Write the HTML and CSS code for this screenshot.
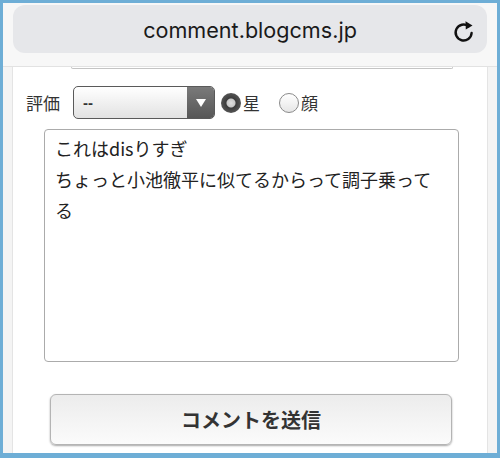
FILE: index.html
```html
<!DOCTYPE html>
<html lang="ja">
  <head>
    <meta charset="UTF-8" />
    <meta name="viewport" content="width=device-width, initial-scale=1.0" />
    <title>comment.blogcms.jp</title>
    <link rel="stylesheet" href="styles.css">
  </head>
  <body>
    <div class="frame">
      <div class="toolbar">
        <div class="urlbar">
          <span class="url">comment.blogcms.jp</span>
          <svg class="reload" width="22" height="24" viewBox="0 0 22 24">
            <path d="M15.5 7.2 A8 8 0 1 0 18.6 14" fill="none" stroke="#111" stroke-width="2.4" stroke-linecap="round" />
            <path d="M12.5 2.2 L19.5 6.4 L12.8 10.6 Z" fill="#111" />
          </svg>
        </div>
      </div>

      <div class="page">
        <div class="content">
          <div class="prev-input"></div>

          <div class="rating">
            <span class="label">評価</span>
            <div class="select">
              <span class="select-text">--</span>
              <span class="select-arrow"></span>
            </div>
            <label class="radio"><span class="dot checked"></span>星</label>
            <label class="radio"><span class="dot"></span>顔</label>
          </div>

          <div class="textarea">これはdisりすぎ<br />ちょっと小池徹平に似てるからって調子乗ってる</div>

          <button class="submit">コメントを送信</button>
        </div>
      </div>
    </div>
  </body>
</html>
```

FILE: styles.css
```css
html, body {
  margin: 0;
  padding: 0;
}
body {
  background: #6eaed6;
  font-family: "Noto Sans CJK JP", sans-serif;
  color: #222;
}
.frame {
  margin: 3px 3px 0 3px;
  height: 450px;
  display: flex;
  flex-direction: column;
  overflow: hidden;
  background: #f4f4f4;
}
.toolbar {
  background: #f7f7f7;
  height: 61px;
  padding: 2px 10px 0 10px;
  border-bottom: 1px solid #e2e2e2;
}
.urlbar {
  height: 48px;
  border-radius: 12px;
  background: #e6e7ea;
  display: flex;
  align-items: center;
  justify-content: center;
  position: relative;
}
.url {
  font-family: "Inter", "Noto Sans", sans-serif;
  font-size: 21.6px;
  color: #1a1a1a;
  margin-top: 2px;
}
.reload {
  position: absolute;
  right: 12px;
  top: 14px;
}
.page {
  flex: 1;
  padding: 0 9px;
  display: flex;
}
.content {
  flex: 1;
  background: #fff;
  border-left: 1px solid #e4e4e4;
  border-right: 1px solid #e4e4e4;
}
.prev-input {
  height: 1px;
  margin: 0 34px 0 58px;
  border: 1px solid #c4c4c4;
  border-top: none;
  border-radius: 0 0 4px 4px;
}
.rating {
  display: flex;
  align-items: center;
  margin-top: 17px;
  padding-left: 13px;
  height: 33px;
}
.label {
  font-size: 17px;
  color: #333;
  margin-right: 13px;
}
.select {
  width: 140px;
  height: 31px;
  border: 1px solid #5a5a5a;
  border-radius: 5px;
  display: flex;
  overflow: hidden;
  background: linear-gradient(#ffffff, #e2e2e2);
  margin-right: 6px;
}
.select-text {
  flex: 1;
  font-family: "Liberation Sans", sans-serif;
  font-size: 15px;
  font-weight: bold;
  color: #333;
  line-height: 31px;
  padding-left: 9px;
}
.select-arrow {
  width: 27px;
  background: linear-gradient(#7a7a7a, #575757);
  display: flex;
  align-items: center;
  justify-content: center;
}
.select-arrow::after {
  content: "";
  border-left: 5px solid transparent;
  border-right: 5px solid transparent;
  border-top: 8px solid #fff;
}
.radio {
  display: flex;
  align-items: center;
  font-size: 17px;
  color: #333;
  margin-right: 19px;
}
.dot {
  width: 20px;
  height: 20px;
  border-radius: 50%;
  border: 1px solid #8a8a8a;
  background: linear-gradient(#fff, #e6e6e6);
  margin-right: 2px;
  box-sizing: border-box;
}
.dot.checked {
  border: none;
  background: radial-gradient(circle, #e0e0e0 0, #c8c8c8 4px, #3c3c3c 5px, #555 10px);
}
.textarea {
  margin: 10px 28px 0 31px;
  height: 221px;
  border: 1px solid #ababab;
  border-radius: 4px;
  padding: 3px 10px 7px 10px;
  font-size: 18px;
  line-height: 31px;
  color: #222;
}
.submit {
  display: block;
  width: 402px;
  height: 51px;
  margin: 32px 0 0 37px;
  border: 1px solid #b4b4b4;
  border-radius: 6px;
  background: linear-gradient(#ececec, #fbfbfb);
  box-shadow: 0 1px 2px rgba(0, 0, 0, 0.35);
  font-family: "Noto Sans CJK JP", sans-serif;
  font-size: 20px;
  font-weight: bold;
  color: #333;
}
```
